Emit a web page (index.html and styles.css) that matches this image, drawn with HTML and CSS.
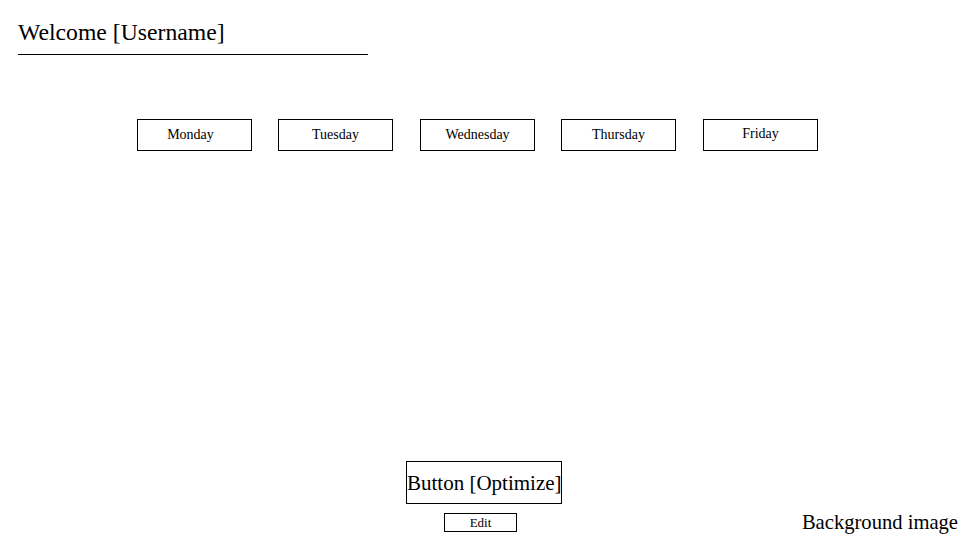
FILE: index.html
```html
<!DOCTYPE html>
<html lang="en">
<head>
<meta charset="utf-8">
<title>Welcome</title>
<link rel="stylesheet" href="styles.css">
</head>
<body>
<div class="page">
  <header class="header">
    <h1 class="welcome">Welcome [Username]</h1>
    <div class="rule"></div>
  </header>
  <nav class="days">
    <div class="day day-left">Monday</div>
    <div class="day day-wide">Tuesday</div>
    <div class="day">Wednesday</div>
    <div class="day day-wide">Thursday</div>
    <div class="day day-high">Friday</div>
  </nav>
  <footer class="footer">
    <div class="spacer"></div>
    <div class="actions">
      <div class="optimize">Button [Optimize]</div>
      <div class="edit">Edit</div>
    </div>
    <div class="bg-label">Background image</div>
  </footer>
</div>
</body>
</html>
```
FILE: styles.css
```css
html, body {
  margin: 0;
  padding: 0;
  background: #fff;
}
body {
  font-family: "Liberation Serif", "Times New Roman", serif;
  color: #000;
}
.page {
  height: 543px;
  display: flex;
  flex-direction: column;
  overflow: hidden;
}
.header {
  padding: 18px 0 0 18px;
}
.welcome {
  margin: 0;
  font-size: 23.7px;
  font-weight: normal;
  line-height: 28px;
}
.rule {
  margin-top: 8px;
  width: 350px;
  border-top: 1px solid #000;
}
.days {
  display: flex;
  gap: 26px;
  padding-left: 137px;
  margin-top: 64px;
}
.day {
  box-sizing: border-box;
  width: 115px;
  height: 32px;
  border: 1px solid #000;
  font-size: 14px;
  line-height: 30px;
  text-align: center;
}
.day-wide {
  margin-right: 1px;
}
.day-left {
  padding-right: 8px;
}
.day-high {
  line-height: 28px;
}
.footer {
  margin-top: auto;
  padding-bottom: 11px;
  display: grid;
  grid-template-columns: 1fr auto 1fr;
}
.actions {
  margin-left: 6px;
  width: 156px;
  display: flex;
  flex-direction: column;
}
.optimize {
  box-sizing: border-box;
  height: 43px;
  border: 1px solid #000;
  font-size: 21px;
  line-height: 43px;
  text-align: center;
  white-space: nowrap;
}
.edit {
  box-sizing: border-box;
  margin-top: 9px;
  margin-left: 38px;
  width: 73px;
  height: 19px;
  border: 1px solid #000;
  font-size: 13px;
  line-height: 17px;
  text-align: center;
}
.bg-label {
  justify-self: end;
  align-self: end;
  padding-right: 4px;
  font-size: 20.6px;
  line-height: 21px;
  margin-bottom: -1px;
  white-space: nowrap;
}
```
